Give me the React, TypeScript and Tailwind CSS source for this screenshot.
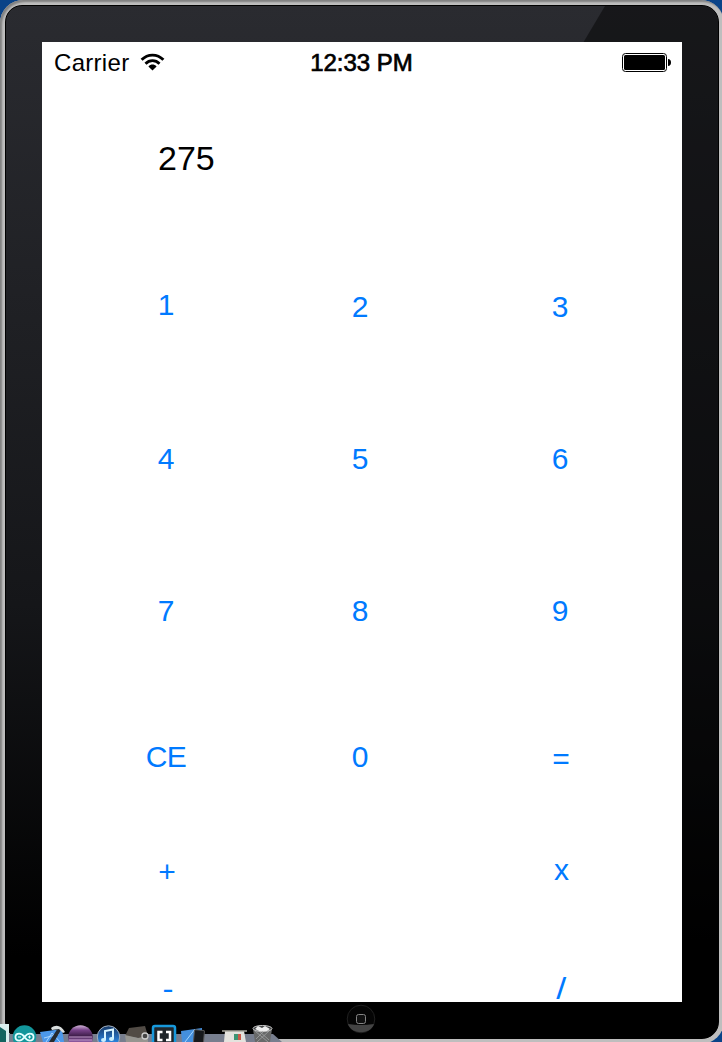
import React from "react";

const rows = [
  { keys: ["1", "2", "3"], h: "h-[152px]" },
  { keys: ["4", "5", "6"], h: "h-[152px]" },
  { keys: ["7", "8", "9"], h: "h-[146px]" },
  { keys: ["CE", "0", "="], h: "h-[114px]" },
  { keys: ["+", "", "x"], h: "h-[118px]" },
  { keys: ["-", "", "/"], h: "h-[34px]" },
];

const keyOffsets: Record<string, string> = {
  "1": "-mt-[2px]",
  CE: "tracking-[-0.5px]",
  "=": "mt-[2px] ml-[2px]",
  "+": "mt-px ml-[2px]",
  x: "-mt-px ml-[3px]",
  "-": "ml-[3px] scale-x-110",
  "/": "ml-[2px] scale-x-120",
};

function StatusBar() {
  return (
    <header className="grid h-10 grid-cols-3 items-center pr-[11px] pl-3 text-black">
      <div className="flex items-center gap-[11px] text-[24px] leading-[38px]">
        <span className="pt-[2px] tracking-[0.3px]">Carrier</span>
        <svg className="h-[18px] w-[25px]" viewBox="0 0 26 19" fill="none" stroke="#000">
          <path d="M1.5 7.2C8 .5 18 .5 24.5 7.2" strokeWidth="3" />
          <path d="M5.6 11.3c4.2-4.3 10.6-4.3 14.8 0" strokeWidth="3" />
          <path d="M8.7 14.2c2.5-2.6 6.1-2.6 8.6 0L13 18.6Z" fill="#000" stroke="none" />
        </svg>
      </div>
      <div className="-ml-[2px] pt-[2px] text-center text-[24px] leading-[38px] whitespace-nowrap [-webkit-text-stroke:0.7px_#000]">12:33 PM</div>
      <svg className="h-[19px] w-[49px] justify-self-end" viewBox="0 0 49 19">
        <rect x=".5" y=".5" width="44" height="18" rx="3" fill="#fff" stroke="#000" />
        <rect x="2" y="2" width="41" height="15" rx="1.5" />
        <path d="M46 6c2 0 3 1.5 3 3.5S48 13 46 13Z" />
      </svg>
    </header>
  );
}

function Dock() {
  return (
    <svg className="absolute bottom-0 left-0 h-[20px] w-[290px]" viewBox="0 1022 290 20">
      <defs>
        <linearGradient id="purple" x1="0" y1="0" x2="0" y2="1">
          <stop offset="0" stopColor="#d2b5d8" />
          <stop offset=".2" stopColor="#764188" />
          <stop offset=".42" stopColor="#43204f" />
          <stop offset=".75" stopColor="#a36bb8" />
        </linearGradient>
        <linearGradient id="blue" x1="0" y1="0" x2="0" y2="1">
          <stop offset="0" stopColor="#163765" />
          <stop offset=".7" stopColor="#2a80d7" />
        </linearGradient>
      </defs>
      <path d="M8 1034H273l9 8H8Z" fill="#777e8e" />
      <path d="M0 1024h9v18H0Z" fill="#d9eeee" />
      <path d="M0 1027l6 4v11H0Z" fill="#13645f" />
      <circle cx="24.5" cy="1037" r="11.8" fill="#13969b" />
      <path d="M24.5 1037c-2-2.8-3.7-3.4-5.3-3.4-5 0-5 7 0 7 1.6 0 3.3-.7 5.3-3.6 2-2.8 3.7-3.4 5.3-3.4 5 0 5 7 0 7-1.6 0-3.3-.7-5.3-3.6Z" fill="none" stroke="#e1ffff" strokeWidth="1.8" />
      <path d="M18 1037h3m7 0h3m-1.5-1.5v3" stroke="#fff" />
      <path d="M40 1032l22-3 2 13H43Z" fill="#4c98eb" />
      <path d="M46 1042l6-9 8 9M44 1038l15-4" fill="none" stroke="#a9d5ff" />
      <path d="M58 1028l3 2-7 12h-5Z" fill="#262b30" />
      <path d="M51 1028c5-4 10-3 14 4l-2 1-4-4-7 1Z" fill="#d8dddd" />
      <circle cx="80.5" cy="1037.5" r="12.3" fill="url(#purple)" />
      <path d="M69 1037h23M69 1040h23" stroke="#d5b1dd" strokeWidth=".8" />
      <circle cx="108.5" cy="1037" r="11.2" fill="url(#blue)" stroke="#a5b1be" />
      <path d="M105 1040v-9l8-1.5v9.5" fill="none" stroke="#d9f5ff" strokeWidth="2" />
      <ellipse cx="103.5" cy="1040" rx="2.5" ry="2" fill="#c9efff" />
      <ellipse cx="111.5" cy="1039" rx="2.5" ry="2" fill="#c9efff" />
      <path d="M125 1036l4-8 16-2 3 10-3 3Z" fill="#514b45" />
      <path d="M125 1035l13 3 10-2v6h-22Z" fill="#969590" />
      <circle cx="145" cy="1036" r="3" fill="#444" stroke="#ccc" strokeWidth="1.3" />
      <rect x="153" y="1026" width="22" height="22" rx="2" fill="#20262b" stroke="#1799dc" strokeWidth="2.5" />
      <path d="M162.500 1032h-4v8h4m3.500-8h4v8h-4" fill="none" stroke="#fff" strokeWidth="2.5" />
      <path d="M181 1031l21-3v14h-20Z" fill="#448fdd" />
      <path d="M185 1042l10-13" stroke="#a6d6ff" />
      <rect x="194" y="1030" width="10" height="14" rx="1" fill="#17191c" stroke="#555" transform="rotate(5 198 1036)" />
      <path d="M225 1031h19l2 11h-22Z" fill="#e4e3de" />
      <path d="M222 1031h25" stroke="#aaa89f" strokeWidth="1.5" />
      <path d="M234 1034h7v6h-7Z" fill="#cb5948" />
      <path d="M234 1034h4v6h-4Z" fill="#3c9573" />
      <path d="M253 1029h19l-2 13h-15Z" fill="#686969" />
      <path d="M255 1031l13 11M259 1031l10 9M269 1031l-12 11M264 1031l-8 8" stroke="#a8aaaa" strokeWidth=".7" />
      <ellipse cx="262.5" cy="1028.5" rx="9.5" ry="3" fill="#3f4142" stroke="#ccc" />
      <path d="M255 1029l3-3 4 2 3-2 5 3-3 2h-8Z" fill="#eee" />
    </svg>
  );
}

export default function App() {
  return (
    <main className="relative h-[1042px] w-[722px] overflow-hidden bg-[#0a4388] font-['Liberation_Sans',Arial,sans-serif]">
      <div className="h-[1044px] w-[724px] rounded-[23px] bg-[#bebebe] pt-[5px] pl-[5px] shadow-[inset_2px_2px_2px_#808080]">
        <div className="relative h-[1034px] w-[714px] overflow-hidden rounded-[17px] border border-black bg-linear-to-b/srgb from-[#2a2b30] via-[#151619] via-58% to-black to-92% pt-9 pl-9">
          <svg className="absolute top-0 left-0 h-full w-full" viewBox="0 0 712 1032" preserveAspectRatio="none">
            <path d="M599 0H712V1032H0V1007Z" fill="#000" fillOpacity=".45" />
          </svg>
          <section className="relative flex h-[960px] w-[640px] flex-col bg-white">
            <StatusBar />
            <output className="mt-[56px] ml-[116px] h-[40px] text-[34px] leading-[40px] text-black">275</output>
            <div className="mt-[110px] text-[30px] leading-[38px] text-[#007aff]">
              {rows.map((row, rowIndex) => (
                <div key={rowIndex} className={`grid grid-cols-[248px_140px_260px] ${row.h}`}>
                  {row.keys.map((key, col) => (
                    <div key={col} className="flex items-start justify-center">
                      {key && <button className={`h-[38px] ${keyOffsets[key] ?? ""}`}>{key}</button>}
                    </div>
                  ))}
                </div>
              ))}
            </div>
          </section>
          <svg className="absolute top-[998px] left-[340px] h-[30px] w-[30px]" viewBox="0 0 30 30">
            <circle cx="15" cy="15" r="13.8" fill="#050505" stroke="#202020" />
            <path d="M2 20Q15 22 28 20C25 31 5 31 2 20Z" fill="#444" />
            <rect x="10.5" y="10.5" width="9" height="9" rx="2" fill="#111" stroke="#858585" />
          </svg>
        </div>
      </div>
      <Dock />
    </main>
  );
}
